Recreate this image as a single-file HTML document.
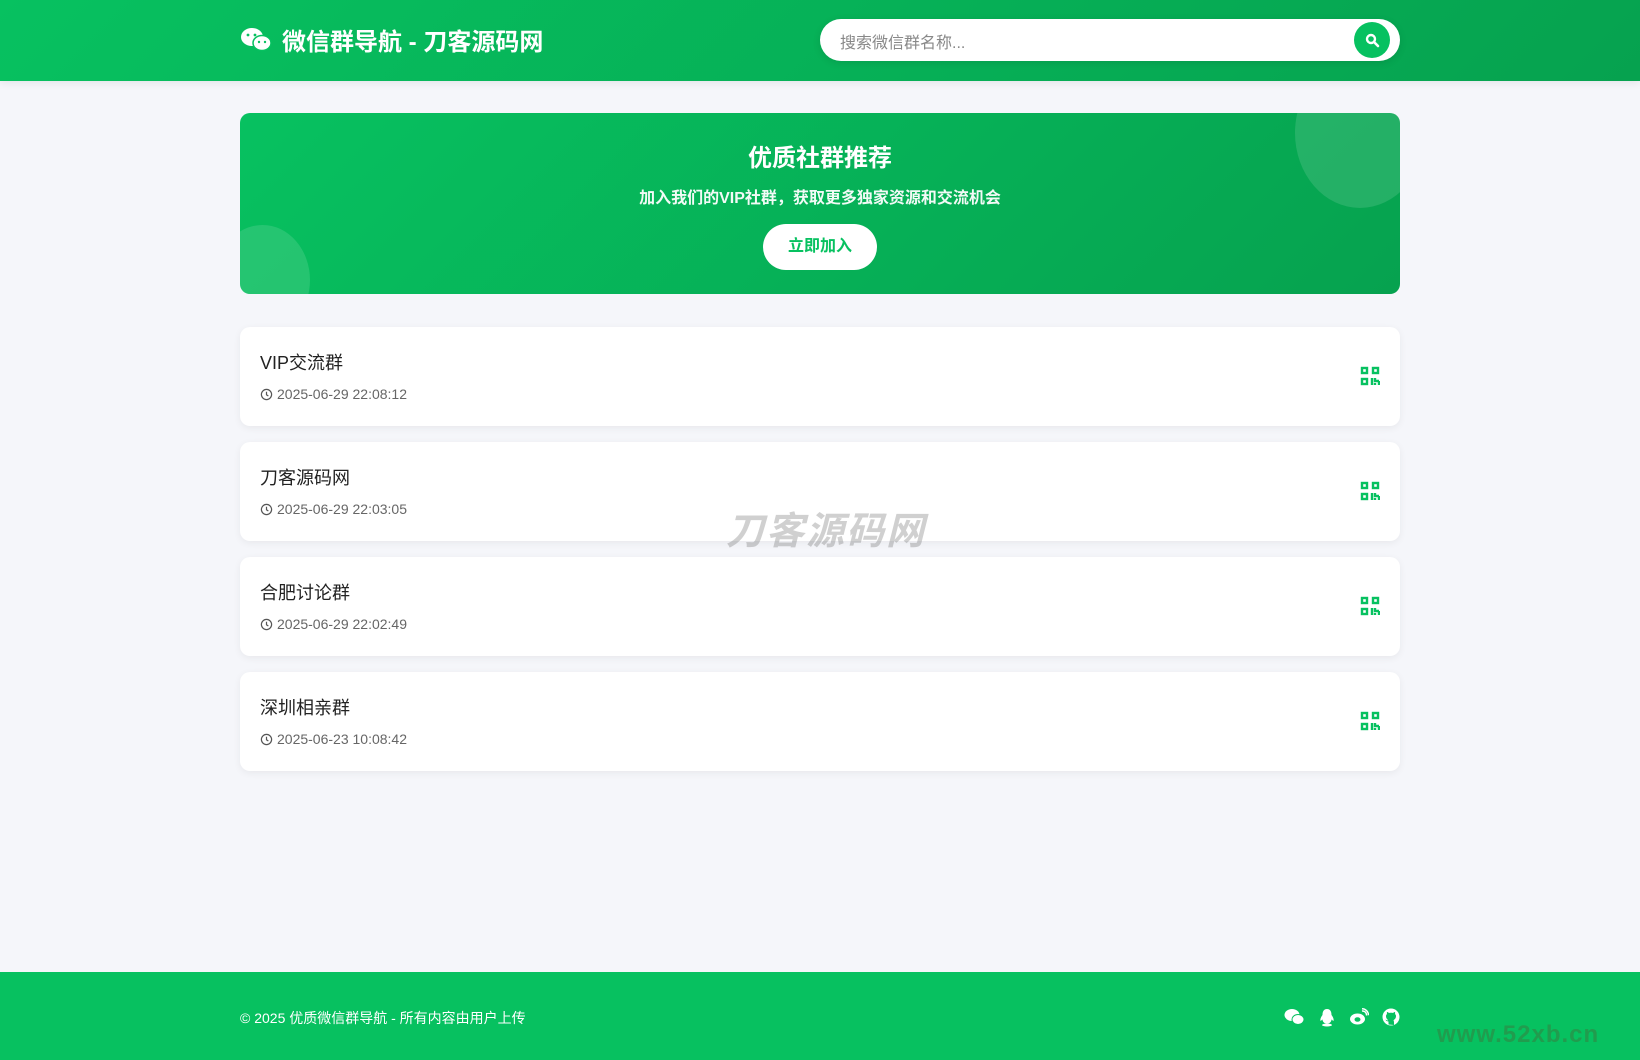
<!DOCTYPE html>
<html><head><meta charset="utf-8"><style>
*{margin:0;padding:0;box-sizing:border-box}
body{width:1640px;height:1060px;background:#f5f6fa;font-family:"Liberation Sans","Noto Sans CJK SC",sans-serif;position:relative;overflow:hidden}
.hd{position:absolute;left:0;top:0;width:1640px;height:81px;background:linear-gradient(135deg,#07c160,#06a24f);box-shadow:0 2px 8px rgba(0,0,0,.08)}
.wrap{position:absolute;left:240px;top:0;width:1160px}
.logo{position:absolute;left:0;top:22px;color:#fff;font-size:24px;font-weight:bold;display:flex;align-items:center;gap:10px}
.search{position:absolute;left:580px;top:19px;width:580px;height:42px;background:#fff;border-radius:21px;box-shadow:0 2px 8px rgba(0,0,0,.1)}
.search span{position:absolute;left:20px;top:10px;color:#888;font-size:16px}
.search .btn{position:absolute;right:10px;top:3px;width:36px;height:36px;border-radius:50%;background:#07c160}
.banner{position:absolute;top:113px;left:0;width:1160px;height:181px;border-radius:10px;overflow:hidden;background:linear-gradient(135deg,#07c160,#06a24f);color:#fff;text-align:center}
.banner h2{font-size:24px;margin-top:25px}
.banner p{font-size:16px;margin-top:11px;font-weight:bold;opacity:.95}
.banner .b{display:inline-block;margin-top:16px;width:114px;height:46px;line-height:46px;background:#fff;color:#07c160;border-radius:23px;font-size:16px;font-weight:bold}
.c1{position:absolute;right:-25px;top:-55px;width:130px;height:150px;border-radius:50%;background:rgba(255,255,255,.12)}
.c2{position:absolute;left:-25px;top:112px;width:95px;height:110px;border-radius:50%;background:rgba(255,255,255,.12)}
.card{position:absolute;left:0;width:1160px;height:99px;background:#fff;border-radius:10px;box-shadow:0 2px 8px rgba(0,0,0,.06)}
.card h3{position:absolute;left:20px;top:22px;font-size:18px;font-weight:normal;color:#222}
.card .d{position:absolute;left:20px;top:59px;font-size:14px;color:#666;display:flex;align-items:center;gap:4px}
.card svg.q{position:absolute;right:20px;top:39px}
.ft{position:absolute;left:0;top:972px;width:1640px;height:88px;background:#07c160}
.ft .t{position:absolute;left:240px;top:36px;color:#fff;font-size:14px}
.ic{position:absolute;top:36px;color:#fff}
.wm{position:absolute;left:726px;top:500px;font-size:38px;font-weight:bold;font-style:italic;color:rgba(120,120,120,.35);letter-spacing:2px}
.wm2{position:absolute;left:1437px;top:1021px;font-size:24px;font-weight:bold;color:rgba(60,120,60,.5);letter-spacing:1px}
</style></head><body>
<div class="hd"><div class="wrap">
<div class="logo"><svg width="32" height="26" viewBox="0 0 32 26"><ellipse cx="12" cy="10" rx="11" ry="9" fill="#fff"/><ellipse cx="22" cy="16" rx="9" ry="7.5" fill="#fff" stroke="#07c160" stroke-width="1.5"/><circle cx="8" cy="8" r="1.4" fill="#07c160"/><circle cx="15" cy="8" r="1.4" fill="#07c160"/><circle cx="19" cy="15" r="1.2" fill="#07c160"/><circle cx="25" cy="15" r="1.2" fill="#07c160"/></svg>微信群导航 - 刀客源码网</div>
<div class="search"><span>搜索微信群名称...</span><div class="btn"><svg width="36" height="36" viewBox="0 0 36 36"><circle cx="17" cy="17" r="4" fill="none" stroke="#fff" stroke-width="2.4"/><path d="M20 20l4 4" stroke="#fff" stroke-width="2.6" stroke-linecap="round"/></svg></div></div>
</div></div>
<div class="wrap">
<div class="banner"><div class="c1"></div><div class="c2"></div><h2>优质社群推荐</h2><p>加入我们的VIP社群，获取更多独家资源和交流机会</p><span class="b">立即加入</span></div>
<div class="card" style="top:327px"><h3>VIP交流群</h3><div class="d"><svg width="13" height="13" viewBox="0 0 14 14"><circle cx="7" cy="7" r="5.5" fill="none" stroke="#555" stroke-width="1.3"/><path d="M7 4v3.3l2 1.3" fill="none" stroke="#555" stroke-width="1.3"/></svg>2025-06-29 22:08:12</div><svg class="q" width="20" height="20" viewBox="0 0 20 20" fill="none" stroke="#07c160" stroke-width="2.4"><rect x="2" y="2" width="5" height="5"/><rect x="13" y="2" width="5" height="5"/><rect x="2" y="13" width="5" height="5"/><path d="M12 12v7M15 12v3h4M19 15v4M15 17v2"/></svg></div>
<div class="card" style="top:442px"><h3>刀客源码网</h3><div class="d"><svg width="13" height="13" viewBox="0 0 14 14"><circle cx="7" cy="7" r="5.5" fill="none" stroke="#555" stroke-width="1.3"/><path d="M7 4v3.3l2 1.3" fill="none" stroke="#555" stroke-width="1.3"/></svg>2025-06-29 22:03:05</div><svg class="q" width="20" height="20" viewBox="0 0 20 20" fill="none" stroke="#07c160" stroke-width="2.4"><rect x="2" y="2" width="5" height="5"/><rect x="13" y="2" width="5" height="5"/><rect x="2" y="13" width="5" height="5"/><path d="M12 12v7M15 12v3h4M19 15v4M15 17v2"/></svg></div>
<div class="card" style="top:557px"><h3>合肥讨论群</h3><div class="d"><svg width="13" height="13" viewBox="0 0 14 14"><circle cx="7" cy="7" r="5.5" fill="none" stroke="#555" stroke-width="1.3"/><path d="M7 4v3.3l2 1.3" fill="none" stroke="#555" stroke-width="1.3"/></svg>2025-06-29 22:02:49</div><svg class="q" width="20" height="20" viewBox="0 0 20 20" fill="none" stroke="#07c160" stroke-width="2.4"><rect x="2" y="2" width="5" height="5"/><rect x="13" y="2" width="5" height="5"/><rect x="2" y="13" width="5" height="5"/><path d="M12 12v7M15 12v3h4M19 15v4M15 17v2"/></svg></div>
<div class="card" style="top:672px"><h3>深圳相亲群</h3><div class="d"><svg width="13" height="13" viewBox="0 0 14 14"><circle cx="7" cy="7" r="5.5" fill="none" stroke="#555" stroke-width="1.3"/><path d="M7 4v3.3l2 1.3" fill="none" stroke="#555" stroke-width="1.3"/></svg>2025-06-23 10:08:42</div><svg class="q" width="20" height="20" viewBox="0 0 20 20" fill="none" stroke="#07c160" stroke-width="2.4"><rect x="2" y="2" width="5" height="5"/><rect x="13" y="2" width="5" height="5"/><rect x="2" y="13" width="5" height="5"/><path d="M12 12v7M15 12v3h4M19 15v4M15 17v2"/></svg></div>
</div>
<div class="wm">刀客源码网</div>
<div class="ft"><div class="t">© 2025 优质微信群导航 - 所有内容由用户上传</div>
<svg class="ic" style="left:1284px" width="20" height="18" viewBox="0 0 20 18"><ellipse cx="8" cy="7" rx="7.5" ry="6" fill="#fff"/><ellipse cx="14" cy="11.5" rx="6" ry="5" fill="#fff" stroke="#07c160" stroke-width="1"/></svg>
<svg class="ic" style="left:1319px" width="16" height="19" viewBox="0 0 16 19"><path d="M8 1C4.5 1 3.5 4 3.5 7c-1.5 2-2.5 4-2 6 .8-.5 1.5-1 1.8-1.6C4 14 5 15.5 8 15.5s4-1.5 4.7-4.1c.3.6 1 1.1 1.8 1.6.5-2-.5-4-2-6C12.5 4 11.5 1 8 1z" fill="#fff"/><ellipse cx="8" cy="17" rx="5" ry="1.5" fill="#fff"/></svg>
<svg class="ic" style="left:1349px" width="20" height="18" viewBox="0 0 20 18"><ellipse cx="8.5" cy="11" rx="7.5" ry="5.5" fill="#fff"/><ellipse cx="8.5" cy="11.5" rx="3" ry="2.3" fill="#07c160"/><path d="M13 3a4 4 0 0 1 4.5 4.5M13 .8a6.5 6.5 0 0 1 6.5 6.5" stroke="#fff" stroke-width="1.5" fill="none"/></svg>
<svg class="ic" style="left:1382px" width="18" height="18" viewBox="0 0 18 18"><circle cx="9" cy="9" r="8.5" fill="#fff"/><path d="M6.5 16.5v-3c-.5-.2-2.5 0-3-2 1 .5 1.5 1 2.5 1 0-1-2-1.5-2-4.5 0-1 .5-1.5 1-2-.3-1 0-2 0-2 1 0 2 1 2 1 1-.3 3-.3 4 0 0 0 1-1 2-1 0 0 .3 1 0 2 .5.5 1 1 1 2 0 3-2 3.5-2.5 4.5.3.5.5 1 .5 1.5v3z" fill="#07c160"/></svg>
</div>
<div class="wm2">www.52xb.cn</div>
</body></html>
